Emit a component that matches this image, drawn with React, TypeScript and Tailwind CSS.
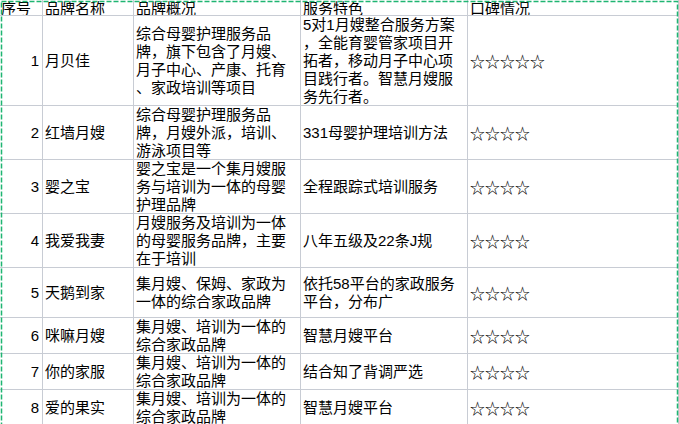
import React from "react";

type Row = {
  no: number;
  name: string;
  desc: string[];
  feat: string[];
  stars: number;
  h: string;
};

const rows: Row[] = [
  {
    no: 1,
    name: "月贝佳",
    desc: ["综合母婴护理服务品", "牌，旗下包含了月嫂、", "月子中心、产康、托育", "、家政培训等项目"],
    feat: ["5对1月嫂整合服务方案", "，全能育婴管家项目开", "拓者，移动月子中心项", "目践行者。智慧月嫂服", "务先行者。"],
    stars: 5,
    h: "h-[90px]",
  },
  {
    no: 2,
    name: "红墙月嫂",
    desc: ["综合母婴护理服务品", "牌，月嫂外派，培训、", "游泳项目等"],
    feat: ["331母婴护理培训方法"],
    stars: 4,
    h: "h-[54px]",
  },
  {
    no: 3,
    name: "婴之宝",
    desc: ["婴之宝是一个集月嫂服", "务与培训为一体的母婴", "护理品牌"],
    feat: ["全程跟踪式培训服务"],
    stars: 4,
    h: "h-[54px]",
  },
  {
    no: 4,
    name: "我爱我妻",
    desc: ["月嫂服务及培训为一体", "的母婴服务品牌，主要", "在于培训"],
    feat: ["八年五级及22条J规"],
    stars: 4,
    h: "h-[54px]",
  },
  {
    no: 5,
    name: "天鹅到家",
    desc: ["集月嫂、保姆、家政为", "一体的综合家政品牌"],
    feat: ["依托58平台的家政服务", "平台，分布广"],
    stars: 4,
    h: "h-[50px]",
  },
  {
    no: 6,
    name: "咪嘛月嫂",
    desc: ["集月嫂、培训为一体的", "综合家政品牌"],
    feat: ["智慧月嫂平台"],
    stars: 4,
    h: "h-[36px]",
  },
  {
    no: 7,
    name: "你的家服",
    desc: ["集月嫂、培训为一体的", "综合家政品牌"],
    feat: ["结合知了背调严选"],
    stars: 4,
    h: "h-[36px]",
  },
  {
    no: 8,
    name: "爱的果实",
    desc: ["集月嫂、培训为一体的", "综合家政品牌"],
    feat: ["智慧月嫂平台"],
    stars: 4,
    h: "h-[36px]",
  },
];

const cell = "border-r border-b border-[#c8ccd4] flex items-center overflow-visible";

function Lines({ lines }: { lines: string[] }) {
  return (
    <div className="flex flex-col">
      {lines.map((l, i) => (
        <span key={i} className="whitespace-nowrap">
          {l}
        </span>
      ))}
    </div>
  );
}

export default function App() {
  return (
    <div
      className="relative w-[679px] h-[424px] overflow-hidden bg-white text-black text-[15px] leading-[18px]"
      style={{ fontFamily: '"Liberation Sans", "Noto Sans CJK SC", sans-serif' }}
    >
      <div className="grid grid-cols-[43px_91px_167px_167px_1fr]">
        {/* header */}
        {["序号", "品牌名称", "品牌概况", "服务特色", "口碑情况"].map((t, i) => (
          <div
            key={t}
            className={`h-[16px] border-r border-b border-[#c8ccd4] overflow-hidden flex items-start ${
              i === 0 ? "pl-[1px]" : "pl-[2px]"
            }`}
          >
            <span className="whitespace-nowrap leading-[17px]">{t}</span>
          </div>
        ))}
        {rows.map((r) => (
          <React.Fragment key={r.no}>
            <div className={`${cell} ${r.h} justify-end pr-[3px]`}>{r.no}</div>
            <div className={`${cell} ${r.h} pl-[2px]`}>{r.name}</div>
            <div className={`${cell} ${r.h} pl-[2px]`}>
              <Lines lines={r.desc} />
            </div>
            <div className={`${cell} ${r.h} pl-[2px]`}>
              <Lines lines={r.feat} />
            </div>
            <div className={`${cell} ${r.h} pl-[2px]`}>
              <span className="whitespace-nowrap" style={{ fontFamily: '"Noto Sans CJK SC", sans-serif' }}>
                {"☆".repeat(r.stars)}
              </span>
            </div>
          </React.Fragment>
        ))}
      </div>
      {/* copy marquee */}
      <svg className="absolute left-0 top-0 pointer-events-none" width="679" height="424">
        <rect
          x="1.5"
          y="1.5"
          width="676"
          height="440"
          fill="none"
          stroke="#1fb572"
          strokeWidth="1.5"
          strokeDasharray="5 2"
        />
      </svg>
    </div>
  );
}
